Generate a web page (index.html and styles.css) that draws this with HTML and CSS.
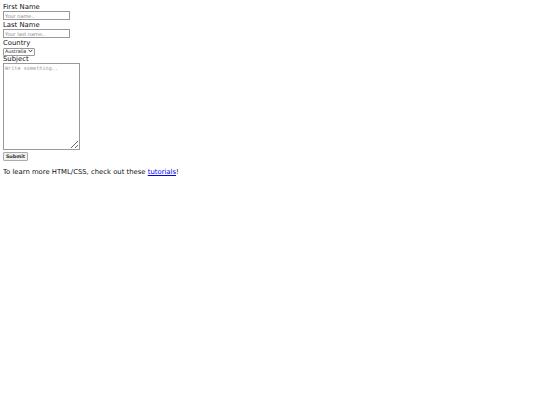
FILE: index.html
```html
<!DOCTYPE html>
<html>
<head>
<meta charset="utf-8">
<link rel="stylesheet" href="styles.css">
</head>
<body>
<form class="form">
  <label class="label" for="fname">First Name</label>
  <input class="field" type="text" id="fname" placeholder="Your name..">
  <label class="label" for="lname">Last Name</label>
  <input class="field" type="text" id="lname" placeholder="Your last name..">
  <label class="label" for="country">Country</label>
  <span class="select-wrap">
    <select class="select" id="country">
      <option>Australia</option>
      <option>Canada</option>
      <option>USA</option>
    </select>
    <svg class="chev" width="5" height="4" viewBox="0 0 5 4"><path d="M0.6 0.8 L2.5 2.8 L4.4 0.8" fill="none" stroke="#222" stroke-width="0.9"/></svg>
  </span>
  <label class="label" for="subject">Subject</label>
  <textarea class="area" id="subject" placeholder="Write something.."></textarea>
  <input class="btn" type="submit" value="Submit">
</form>
<p class="note">To learn more HTML/CSS, check out these <a class="link" href="#">tutorials</a>!</p>
</body>
</html>
```
FILE: styles.css
```css
body {
  margin: 3px;
  font-family: "DejaVu Sans", sans-serif;
  font-size: 6.85px;
  line-height: 8px;
  color: #111;
  background: #fff;
}
.form {
  display: flex;
  flex-direction: column;
  align-items: flex-start;
}
.label {
  display: block;
  height: 8px;
  padding-top: 1px;
  box-sizing: border-box;
  line-height: 7px;
}
.field {
  box-sizing: border-box;
  width: 67px;
  height: 9px;
  margin: 0 0 1px 0;
  padding: 0 1px;
  border: 1px solid #999;
  font-family: "DejaVu Sans", sans-serif;
  font-size: 5px;
  outline: none;
}
.field::placeholder { color: #888; }
.select-wrap {
  position: relative;
  display: block;
  height: 8px;
  margin: 0;
}
.select {
  appearance: none;
  -webkit-appearance: none;
  box-sizing: border-box;
  width: 32px;
  height: 8px;
  margin: 0;
  padding: 0 0 0 1px;
  font-family: "DejaVu Sans", sans-serif;
  font-size: 4.8px;
  line-height: 6px;
  color: #222;
  background: #fff;
  border: 1px solid #999;
  border-radius: 1px;
}
.chev {
  position: absolute;
  right: 2px;
  top: 2px;
  pointer-events: none;
}
.area {
  box-sizing: border-box;
  width: 77px;
  height: 87px;
  margin: 0;
  padding: 1px;
  border: 1px solid #999;
  font-family: "DejaVu Sans Mono", monospace;
  font-size: 5.2px;
  line-height: 6px;
  outline: none;
}
.area::placeholder { color: #999; }
.btn {
  box-sizing: border-box;
  margin-top: 2px;
  height: 9px;
  width: 25px;
  padding: 0;
  font-family: "DejaVu Sans", sans-serif;
  font-size: 4.8px;
  font-weight: 600;
  color: #333;
  border: 1px solid #aaa;
  border-radius: 1px;
  background: #f0f0f0;
}
.note {
  margin: 7px 0 0 0;
}
.link { color: #0000ee; }
```
